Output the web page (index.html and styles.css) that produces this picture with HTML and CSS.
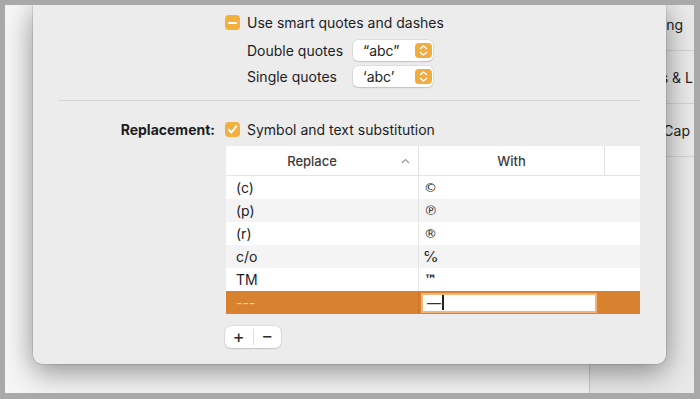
FILE: index.html
```html
<!DOCTYPE html>
<html lang="en">
<head>
  <meta charset="UTF-8">
  <title>Text Replacement</title>
  <link rel="stylesheet" href="styles.css">
</head>
<body>
  <div class="screen">
    <div class="window">
      <div class="main"></div>
      <div class="side">
        <div class="side-row side-one">Spelling</div>
        <div class="side-row side-two">Marks &amp; L</div>
        <div class="side-row side-three">Small Cap</div>
      </div>
    </div>

    <!-- sheet over the preferences window -->
    <div class="sheet">
      <div class="block">
        <div class="row">
          <span class="check mixed"><span class="dash"></span></span>
          <span>Use smart quotes and dashes</span>
        </div>
        <div class="row sub first-sub">
          <span class="sub-label">Double quotes</span>
          <div class="popup">
            <span>&ldquo;abc&rdquo;</span>
            <span class="stepper">
              <svg width="17" height="15" viewBox="0 0 17 15"><polyline points="5.5,5.5 8.5,3 11.5,5.5" /><polyline points="5.5,9.5 8.5,12 11.5,9.5" /></svg>
            </span>
          </div>
        </div>
        <div class="row sub">
          <span class="sub-label">Single quotes</span>
          <div class="popup">
            <span>&lsquo;abc&rsquo;</span>
            <span class="stepper">
              <svg width="17" height="15" viewBox="0 0 17 15"><polyline points="5.5,5.5 8.5,3 11.5,5.5" /><polyline points="5.5,9.5 8.5,12 11.5,9.5" /></svg>
            </span>
          </div>
        </div>
      </div>

      <div class="sep"></div>

      <div class="field">
        <span class="field-label">Replacement:</span>
        <span class="check">
          <svg width="15" height="15" viewBox="0 0 15 15"><polyline points="3.8,7.8 6.4,10.5 11.2,4.3" /></svg>
        </span>
        <span>Symbol and text substitution</span>
      </div>

      <div class="table">
        <div class="thead">
          <div class="th th-replace">Replace
            <svg class="sort" width="9" height="6" viewBox="0 0 9 6"><polyline points="1,5 4.5,1.5 8,5" /></svg>
          </div>
          <div class="th th-with">With</div>
          <div class="th th-rest"></div>
        </div>
        <div class="tr"><div class="c1">(c)</div><div class="c2 sym">&copy;</div></div>
        <div class="tr"><div class="c1">(p)</div><div class="c2 sym">&#8471;</div></div>
        <div class="tr"><div class="c1">(r)</div><div class="c2 sym">&reg;</div></div>
        <div class="tr"><div class="c1">c/o</div><div class="c2">&#8453;</div></div>
        <div class="tr"><div class="c1">TM</div><div class="c2 tm">&trade;</div></div>
        <div class="tr selected">
          <div class="c1">---</div>
          <div class="c2"><div class="edit">&mdash;<span class="caret"></span></div></div>
        </div>
      </div>

      <div class="addremove">
        <span class="btn">+</span>
        <span class="btn btn-minus">&minus;</span>
      </div>
    </div>
  </div>
</body>
</html>
```

FILE: styles.css
```css
body {
  margin: 0;
  background-color: #a9a9a9;
  font-family: Inter, 'Noto Sans', sans-serif;
  font-size: 14px;
  color: #1d1d1f;
}
.screen {
  position: relative;
  margin: 5px 6px 6px 5px;
  height: 388px;
  background-color: #f6f6f6;
  overflow: hidden;
}
.window {
  display: flex;
  height: 100%;
}
.main {
  width: 584px;
  flex-shrink: 0;
}
.side {
  flex: 1;
  min-width: 0;
  background-color: #e9e9e9;
  border-left: 1px solid #cdcdcd;
  margin-top: -7px;
}
.side-row {
  height: 52px;
  border-bottom: 1px solid #d3d3d3;
  display: flex;
  align-items: center;
  justify-content: flex-end;
  white-space: nowrap;
  overflow: hidden;
  color: #222;
}
.side-one {
  padding-right: 11px;
}
.side-two {
  padding-right: 1px;
}
.side-three {
  padding-right: 4px;
}

.sheet {
  position: absolute;
  left: 28px;
  top: 0;
  width: 633px;
  height: 359px;
  box-sizing: border-box;
  padding-top: 5px;
  background-color: #ececed;
  border-radius: 0 0 9px 9px;
  box-shadow: 0 0 0 0.5px rgba(0, 0, 0, 0.18), 0 10px 30px rgba(0, 0, 0, 0.34), 0 0 22px rgba(0, 0, 0, 0.12);
}
.block {
  margin-left: 192px;
}
.row {
  display: flex;
  align-items: center;
  height: 25px;
  gap: 7px;
}
.row.sub {
  height: 26px;
  padding-left: 22px;
  gap: 0;
}
.row.first-sub {
  margin-top: 2px;
}
.sub-label {
  width: 106px;
}
.check {
  width: 15px;
  height: 15px;
  border-radius: 4px;
  background-color: #f2b03f;
  display: flex;
  align-items: center;
  justify-content: center;
  flex-shrink: 0;
}
.check svg polyline {
  fill: none;
  stroke: #ffffff;
  stroke-width: 2;
  stroke-linecap: round;
  stroke-linejoin: round;
}
.check .dash {
  width: 9px;
  height: 2px;
  border-radius: 1px;
  background-color: #ffffff;
}
.popup {
  width: 80px;
  height: 21px;
  box-sizing: border-box;
  padding: 0 1px 0 10px;
  background-color: #ffffff;
  border-radius: 5px;
  box-shadow: 0 0 0 0.5px rgba(0, 0, 0, 0.12), 0 1px 1.5px rgba(0, 0, 0, 0.12);
  display: flex;
  align-items: center;
  justify-content: space-between;
}
.stepper {
  width: 17px;
  height: 15px;
  border-radius: 4px;
  background-color: #f0ad3e;
  display: flex;
}
.stepper polyline {
  fill: none;
  stroke: #ffffff;
  stroke-width: 1.4;
  stroke-linecap: round;
  stroke-linejoin: round;
}
.sep {
  margin: 11px 26px 0;
  height: 1px;
  background-color: #d6d6d8;
}
.field {
  display: flex;
  align-items: center;
  height: 25px;
  margin-top: 16px;
  gap: 7px;
}
.field-label {
  width: 182px;
  margin-right: 3px;
  text-align: right;
  font-weight: 700;
}

.table {
  margin: 4px 0 0 193px;
  width: 414px;
  background-color: #ffffff;
}
.thead {
  display: flex;
  height: 29px;
  border-bottom: 1px solid #e4e4e6;
  font-size: 13px;
  font-weight: 500;
  color: #3a3a3c;
}
.th {
  display: flex;
  align-items: center;
  justify-content: center;
  box-sizing: border-box;
  position: relative;
}
.th-replace {
  width: 193px;
  padding-right: 20px;
  border-right: 1px solid #e2e2e4;
}
.sort {
  position: absolute;
  right: 8px;
  top: 12px;
}
.sort polyline {
  fill: none;
  stroke: #9a9a9e;
  stroke-width: 1.2;
}
.th-with {
  width: 186px;
  border-right: 1px solid #e2e2e4;
}
.th-rest {
  flex: 1;
}
.tr {
  display: flex;
  height: 23px;
  align-items: stretch;
}
.tr:nth-child(odd) {
  background-color: #f4f4f5;
}
.c1 {
  width: 193px;
  box-sizing: border-box;
  padding-left: 10px;
  border-right: 1px solid #e6e6e8;
  display: flex;
  align-items: center;
}
.c2 {
  flex: 1;
  padding-left: 5px;
  display: flex;
  align-items: center;
}
.c2.sym {
  font-family: 'DejaVu Sans', sans-serif;
  font-size: 13px;
}
.c2.tm {
  font-family: 'DejaVu Sans', sans-serif;
  font-size: 13px;
  font-weight: 700;
}
.tr.selected {
  background-color: #d8812f;
}
.tr.selected .c1 {
  color: #f8d2ac;
  border-right-color: #c9742a;
}
.tr.selected .c2 {
  padding-left: 2px;
}
.edit {
  width: 176px;
  height: 20px;
  box-sizing: border-box;
  padding-left: 4px;
  border: 2px solid #f3b47c;
  background-color: #ffffff;
  display: flex;
  align-items: center;
  color: #333;
}
.caret {
  width: 1.5px;
  height: 15px;
  margin-left: 1px;
  background-color: #222;
}
.addremove {
  margin: 12px 0 0 192px;
  width: 56px;
  height: 22px;
  display: flex;
  align-items: center;
  background-color: #ffffff;
  border-radius: 6px;
  box-shadow: 0 0 0 0.5px rgba(0, 0, 0, 0.12), 0 1px 1.5px rgba(0, 0, 0, 0.12);
}
.btn {
  width: 28px;
  text-align: center;
  font-size: 18px;
  line-height: 22px;
  color: #2a2a2a;
}
.btn-minus {
  border-left: 1px solid #e0e0e0;
  line-height: 14px;
  padding-bottom: 2px;
}
```
